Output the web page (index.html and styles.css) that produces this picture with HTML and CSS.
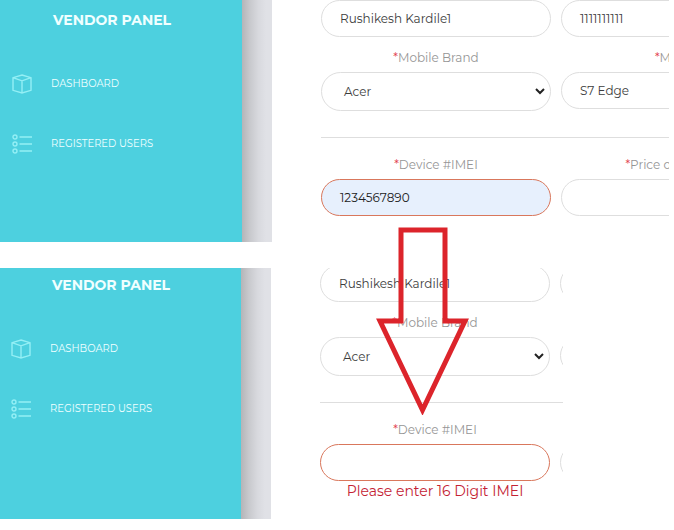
FILE: index.html
```html
<!DOCTYPE html>
<html lang="en">
<head>
<meta charset="utf-8">
<title>Vendor Panel</title>
<link rel="stylesheet" href="styles.css">
</head>
<body>
<svg class="sprite" width="0" height="0" aria-hidden="true">
  <symbol id="box" viewBox="0 0 20 20"><path d="M10 1 19 3.7v12.6L10 19 1 16.3V3.7ZM1 3.7l9 3.1 9-3.1M10 6.8V19"/></symbol>
  <symbol id="list" viewBox="0 0 20 20"><circle cx="3" cy="3" r="2"/><circle cx="3" cy="10" r="2"/><circle cx="3" cy="17" r="2"/><path d="M7.5 3H20M7.5 10H20M7.5 17H20"/></symbol>
  <symbol id="chevron" viewBox="0 0 10 8"><path d="m1 2 4 4 4-4"/></symbol>
</svg>

<section class="panel panel-top">
  <aside class="sidebar">
    <h1 class="brand">VENDOR PANEL</h1>
    <a class="nav"><svg class="icon"><use href="#box"/></svg><span>DASHBOARD</span></a>
    <a class="nav"><svg class="icon"><use href="#list"/></svg><span>REGISTERED USERS</span></a>
  </aside>
  <div class="gutter"></div>
  <main class="form">
    <div class="row">
      <div class="field"><span>Rushikesh Kardile1</span></div>
      <div class="field"><span>1111111111</span></div>
    </div>
    <div class="row labels">
      <div class="label"><i>*</i>Mobile Brand</div>
      <div class="label"><i>*</i>Model</div>
    </div>
    <div class="row selects">
      <div class="field select"><span>Acer</span><svg class="chevron"><use href="#chevron"/></svg></div>
      <div class="field"><span>S7 Edge</span></div>
    </div>
    <div class="rule"></div>
    <div class="row labels imei-labels">
      <div class="label"><i>*</i>Device #IMEI</div>
      <div class="label"><i>*</i>Price of Product</div>
    </div>
    <div class="row">
      <div class="field invalid filled"><span>1234567890</span></div>
      <div class="field"></div>
    </div>
  </main>
</section>

<section class="panel panel-bottom">
  <aside class="sidebar">
    <h1 class="brand">VENDOR PANEL</h1>
    <a class="nav"><svg class="icon"><use href="#box"/></svg><span>DASHBOARD</span></a>
    <a class="nav"><svg class="icon"><use href="#list"/></svg><span>REGISTERED USERS</span></a>
  </aside>
  <div class="gutter"></div>
  <main class="form">
    <div class="row">
      <div class="field"><span>Rushikesh Kardile1</span></div>
      <div class="field"></div>
    </div>
    <div class="row labels">
      <div class="label"><i>*</i>Mobile Brand</div>
    </div>
    <div class="row selects">
      <div class="field select"><span>Acer</span><svg class="chevron"><use href="#chevron"/></svg></div>
      <div class="field"></div>
    </div>
    <div class="rule"></div>
    <div class="row labels imei-labels">
      <div class="label"><i>*</i>Device #IMEI</div>
    </div>
    <div class="row">
      <div class="field invalid"></div>
      <div class="field"></div>
    </div>
    <div class="error">Please enter 16 Digit IMEI</div>
  </main>
</section>

<svg class="arrow" width="96" height="190" viewBox="0 0 96 190"><path d="M25 5H69V96H89L46.500 185 4 96H25Z"/></svg>
</body>
</html>
```
FILE: styles.css
```css
* { box-sizing: border-box; }
body {
  margin: 0;
  width: 674px;
  height: 530px;
  overflow: hidden;
  position: relative;
  background: #fff;
  color: #3c3c3c;
  font: 12px/20px Montserrat, Inter, "Open Sans", sans-serif;
}
.sprite { position: absolute; }
.panel { display: flex; overflow: hidden; }
.panel-top { width: 669px; height: 242px; }
.panel-bottom { width: 563px; height: 251px; margin-top: 26px; }
.sidebar { flex: none; width: 242px; background: #4dd0df; color: #f0ffff; }
.panel-bottom .sidebar { width: 241px; }
.gutter {
  flex: none;
  width: 30px;
  background: linear-gradient(90deg, #b4b5b8 0, #c7c8cc 25%, #d8d9de 55%, #e0e1e6 80%);
}
.brand {
  margin: 10px 0 43px 53px;
  font-size: 14px;
  line-height: 20px;
  font-weight: 700;
  white-space: nowrap;
}
.nav { display: flex; align-items: center; height: 20px; margin: 0 0 40px 12px; }
.icon { width: 20px; height: 20px; margin-right: 19px; fill: none; stroke: #94eff5; stroke-width: 1.4; position: relative; top: 1px; }
.nav span { font-size: 10px; white-space: nowrap; transform: translateY(.5px) scaleY(1.12); }
.panel-bottom .brand { margin: 7px 0 43px 52px; }
.panel-bottom .nav { margin-left: 11px; }

.form { flex: 1; min-width: 0; overflow: hidden; padding-left: 49px; }
.panel-bottom .form > .row:first-child { margin-top: -3px; }
.row { display: grid; grid-template-columns: 230px 230px; column-gap: 10px; }
.field {
  display: flex;
  align-items: center;
  height: 37px;
  padding: 0 18px 1px;
  border: 1px solid #dedede;
  border-radius: 19px;
  white-space: nowrap;
}
.select { height: 39px; padding: 0 5px 1px 22px; border-radius: 20px; justify-content: space-between; }
.field span, .label { transform: translateY(.4px) scaleY(1.08); }
.chevron { width: 10px; height: 8px; fill: none; stroke: #222; stroke-width: 2; }
.invalid { border-color: #d9775c; }
.filled { background: #e7f0fd; color: #222; }
.labels { height: 35px; align-items: center; padding-top: 5px; }
.imei-labels { height: 41px; padding-top: 10px; }
.label { text-align: center; color: #959595; white-space: nowrap; }
.label i { font-style: normal; color: #e2404b; }
.rule { height: 1px; margin-top: 26px; background: #dedede; }
.error { width: 230px; text-align: center; color: #c42234; font-size: 14px; white-space: nowrap; }

.arrow { position: absolute; left: 376px; top: 225px; fill: none; stroke: #dc242b; stroke-width: 5; }
```
